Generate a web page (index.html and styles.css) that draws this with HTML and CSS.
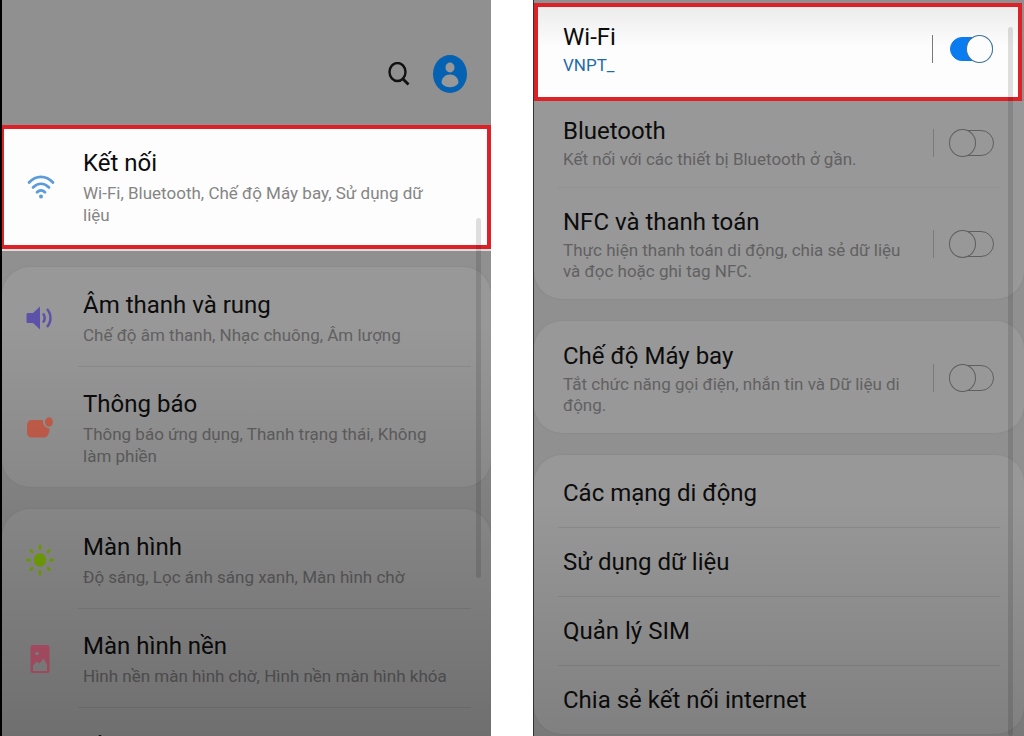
FILE: index.html
```html
<!DOCTYPE html>
<html lang="vi">
<head>
    <meta charset="UTF-8">
    <meta name="viewport" content="width=device-width, initial-scale=1.0">
    <title>Cài đặt kết nối</title>
    <link rel="stylesheet" href="styles.css">
</head>
<body>
    <div id="container">
        <section class="screen settings">
            <header class="toolbar">
                <button type="button" aria-label="Tìm kiếm">
                    <svg width="22" height="24" viewBox="0 0 22 24" fill="none" stroke="#111" stroke-width="2.4">
                        <ellipse cx="9.5" cy="10" rx="8" ry="9"/>
                        <path d="M14.500 16.500l6 6" stroke-width="2.800"/>
                    </svg>
                </button>
                <button type="button" aria-label="Tài khoản">
                    <svg width="34" height="38" viewBox="0 0 34 38">
                        <ellipse cx="17" cy="19" rx="17" ry="19" fill="#0561b2"/>
                        <ellipse cx="17" cy="12.5" rx="4.5" ry="5" fill="#989898"/>
                        <path d="M8.500 28c0-5.500 4-8.500 8.500-8.500s8.500 3 8.500 8.500c-2 3-5 4.300-8.500 4.300S10.500 31 8.500 28z" fill="#989898"/>
                    </svg>
                </button>
            </header>

            <a href="#" class="row highlight">
                <span class="icon">
                    <svg width="28" height="26" viewBox="0 0 28 26" fill="none" stroke="#5b9bdc" stroke-width="2.700" stroke-linecap="round">
                        <path d="M2 8.500C9 1 19 1 26 8.500"/>
                        <path d="M6 13.500c5-5 11-5 16 0"/>
                        <path d="M10 18.300c2.500-2.600 5.500-2.600 8 0"/>
                        <circle cx="14" cy="22.500" r="2" fill="#5b9bdc" stroke="none"/>
                    </svg>
                </span>
                <span class="text">
                    <span class="title">Kết nối</span>
                    <span class="desc">Wi-Fi, Bluetooth, Chế độ Máy bay, Sử dụng dữ liệu</span>
                </span>
            </a>

            <div class="card">
                <a href="#" class="row">
                    <span class="icon">
                        <svg width="28" height="24" viewBox="0 0 28 24">
                            <path d="M2 7h5l7-6.500v23L7 17H2c-1 0-1.500-.5-1.500-1.500v-7C.5 7.500 1 7 2 7z" fill="#5c52a8"/>
                            <path d="M17 7.500c2.300 2.500 2.300 6.500 0 9M21 3c4.600 5 4.600 13 0 18" fill="none" stroke="#5c52a8" stroke-width="2.500"/>
                        </svg>
                    </span>
                    <span class="text">
                        <span class="title">Âm thanh và rung</span>
                        <span class="desc">Chế độ âm thanh, Nhạc chuông, Âm lượng</span>
                    </span>
                </a>
                <a href="#" class="row">
                    <span class="icon">
                        <svg width="28" height="22" viewBox="0 0 28 22" fill="#c9604d">
                            <path d="M6 3h11c-.5 4.500 2 8 6.500 8.500-.3 5.500-2 9-5 9H6c-3 0-5-1.500-5-5v-7C1 5 3 3 6 3z"/>
                            <ellipse cx="23" cy="5" rx="4" ry="4.700"/>
                        </svg>
                    </span>
                    <span class="text">
                        <span class="title">Thông báo</span>
                        <span class="desc">Thông báo ứng dụng, Thanh trạng thái, Không làm phiền</span>
                    </span>
                </a>
            </div>

            <div class="card">
                <a href="#" class="row">
                    <span class="icon">
                        <svg width="28" height="32" viewBox="0 0 28 32">
                            <ellipse cx="14" cy="16" rx="6.200" ry="6.800" fill="#7cb008"/>
                            <path d="M14 2v2.500M14 27.500V30M1.500 16h2M24.500 16h2M5 6.500l1 1.200M22 24.300l1 1.200M23 6.500l-1 1.200M6 24.300l-1 1.200" stroke="#7cb008" stroke-width="3" stroke-linecap="round"/>
                        </svg>
                    </span>
                    <span class="text">
                        <span class="title">Màn hình</span>
                        <span class="desc">Độ sáng, Lọc ánh sáng xanh, Màn hình chờ</span>
                    </span>
                </a>
                <a href="#" class="row">
                    <span class="icon">
                        <svg width="20" height="28" viewBox="0 0 20 28">
                            <rect x=".5" width="19" height="28" rx="2.500" fill="#cb5d78"/>
                            <circle cx="7" cy="8.500" r="1.800" fill="#9a9a9a"/>
                            <path d="M3 26v-5.500l4-4 2.500 2 4-5 3.500 6V26z" fill="#9a9a9a"/>
                        </svg>
                    </span>
                    <span class="text">
                        <span class="title">Màn hình nền</span>
                        <span class="desc">Hình nền màn hình chờ, Hình nền màn hình khóa</span>
                    </span>
                </a>
                <a href="#" class="row">
                    <span class="icon"></span>
                    <span class="text">
                        <span class="title">Themes</span>
                    </span>
                </a>
            </div>
            <div class="scrollbar"></div>
        </section>

        <section class="screen connections">
            <label class="row highlight">
                <span class="text">
                    <span class="title">Wi-Fi</span>
                    <span class="desc network">VNPT_</span>
                </span>
                <input type="checkbox" class="switch" checked>
            </label>

            <div class="card joined">
                <label class="row">
                    <span class="text">
                        <span class="title">Bluetooth</span>
                        <span class="desc">Kết nối với các thiết bị Bluetooth ở gần.</span>
                    </span>
                    <input type="checkbox" class="switch">
                </label>
                <label class="row">
                    <span class="text">
                        <span class="title">NFC và thanh toán</span>
                        <span class="desc">Thực hiện thanh toán di động, chia sẻ dữ liệu và đọc hoặc ghi tag NFC.</span>
                    </span>
                    <input type="checkbox" class="switch">
                </label>
            </div>

            <div class="card">
                <label class="row">
                    <span class="text">
                        <span class="title">Chế độ Máy bay</span>
                        <span class="desc">Tắt chức năng gọi điện, nhắn tin và Dữ liệu di động.</span>
                    </span>
                    <input type="checkbox" class="switch">
                </label>
            </div>

            <div class="card links">
                <a href="#" class="row"><span class="title">Các mạng di động</span></a>
                <a href="#" class="row"><span class="title">Sử dụng dữ liệu</span></a>
                <a href="#" class="row"><span class="title">Quản lý SIM</span></a>
                <a href="#" class="row"><span class="title">Chia sẻ kết nối internet</span></a>
            </div>
            <div class="scrollbar"></div>
        </section>
    </div>
</body>
</html>
```

FILE: styles.css
```css
* {
    box-sizing: border-box;
}

body {
    margin: 0;
    background-color: #fff;
    font-family: Roboto, "Liberation Sans", sans-serif;
    color: #0c0c0c;
}

#container {
    display: grid;
    grid-template-columns: 1fr 1fr;
    gap: 42px;
    height: 100vh;
    overflow: hidden;
}

.screen {
    position: relative;
    height: 100vh;
    overflow: hidden;
    background-color: #909090;
}

/* shade that darkens the lower part of each screen */
.screen::after {
    content: "";
    position: absolute;
    inset: 0;
    pointer-events: none;
}

.settings {
    border-left: 2px solid #000;
}

.settings::after {
    background: linear-gradient(transparent 44%, rgba(0, 0, 0, 0.27));
}

.connections {
    border-left: 1px solid #333;
    padding-top: 3px;
}

.connections::after {
    background: linear-gradient(transparent 68%, rgba(0, 0, 0, 0.16));
}

.toolbar {
    display: flex;
    justify-content: flex-end;
    align-items: center;
    gap: 23px;
    height: 125px;
    padding: 22px 24px 0 0;
}

.toolbar button {
    display: flex;
    padding: 0;
    border: none;
    background: none;
    cursor: pointer;
}

.card {
    margin-bottom: 22px;
    border-radius: 28px;
    background-color: #989898;
    box-shadow: 0 0 1px 1px #8c8c8c;
}

.row {
    display: flex;
    align-items: center;
    position: relative;
    color: inherit;
    text-decoration: none;
    cursor: pointer;
}

.row + .row::before {
    content: "";
    position: absolute;
    top: 0;
    left: 76px;
    right: 20px;
    height: 1px;
    background-color: #8b8b8b;
}

.icon {
    display: flex;
    justify-content: center;
    width: 76px;
    flex: none;
}

.text {
    flex: 1;
}

.title,
.desc {
    display: block;
}

.title {
    font-size: 24px;
    line-height: 32px;
}

.desc {
    font-size: 17px;
    color: #616161;
}

.settings .row {
    padding: 22px 40px 20px 0;
}

.settings .icon {
    margin-right: 5px;
}

.settings .desc {
    margin-top: 3px;
    line-height: 22px;
}

.highlight {
    border: 4px solid #dc2127;
    background-color: #fdfdfd;
}

.settings .highlight {
    margin: 0 0 18px -2px;
    padding: 18px 40px 19px 0;
    box-shadow: 0 2px 0 #dedede;
}

.settings .highlight .icon {
    width: 74px;
}

.highlight .desc {
    color: #858585;
}

.connections .row {
    padding: 19px 30px 17px 29px;
}

.connections .row + .row::before {
    left: 24px;
    right: 24px;
}

.connections .desc {
    margin-top: 2px;
    line-height: 21px;
}

.connections .highlight {
    margin-right: 2px;
    padding: 14px 25px 21px 25px;
    background: linear-gradient(#ececec, #fdfdfd 45%);
}

.connections .highlight .network {
    color: #1d6ca8;
}

.connections .joined {
    border-radius: 0 0 28px 28px;
}

.connections .joined .row:first-child {
    padding-top: 14px;
}

/* only a trace of a line between Bluetooth and NFC */
.connections .joined .row + .row::before {
    background-color: #939393;
}

.connections .links {
    padding-top: 3px;
}

.connections .links .row {
    min-height: 69px;
    padding-top: 18px;
    padding-bottom: 18px;
}

.switch {
    appearance: none;
    position: relative;
    flex: none;
    width: 61px;
    height: 28px;
    margin: 0 0 0 20px;
    border-left: 1px solid #7a7a7a;
    cursor: pointer;
}

.switch::before,
.switch::after {
    content: "";
    position: absolute;
    border: 1px solid #5f5f5f;
    box-sizing: border-box;
}

.switch::before {
    top: 1px;
    right: 0;
    width: 40px;
    height: 26px;
    border-radius: 13px;
}

.switch::after {
    top: 0;
    right: 18px;
    width: 27px;
    height: 28px;
    border-radius: 50%;
    background-color: #989898;
}

.switch:checked::before {
    top: 2px;
    width: 43px;
    height: 24px;
    border-color: #0a7cf0;
    background-color: #0a7cf0;
}

.switch:checked::after {
    right: 0;
    border-color: #3f7096;
    background-color: #fdfdfd;
}

.scrollbar {
    position: absolute;
    right: 10px;
    top: 218px;
    width: 5px;
    height: 360px;
    border-radius: 3px;
    background-color: rgba(0, 0, 0, 0.12);
}

.connections .scrollbar {
    right: 11px;
    top: 27px;
    bottom: 0;
    height: auto;
}
```
